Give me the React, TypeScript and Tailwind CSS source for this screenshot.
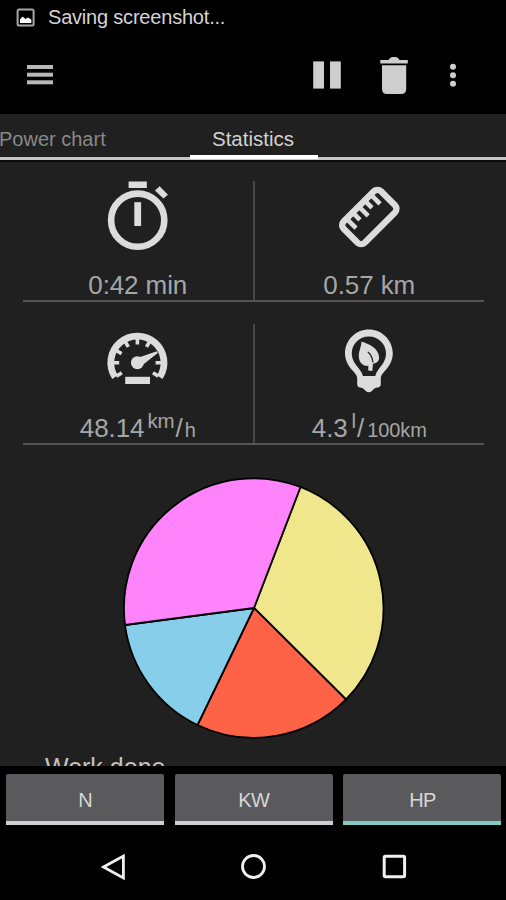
import type { ReactNode } from "react";

const slices = [
  { color: "#f0e68c", from: [300.5, 487], to: [346, 699.5], name: "khaki" },
  { color: "#ff6347", from: [346, 699.5], to: [197.5, 725], name: "tomato" },
  { color: "#87ceeb", from: [197.5, 725], to: [125, 625], name: "sky" },
  { color: "#ff83fa", from: [125, 625], to: [300.5, 487], name: "orchid" },
];

const units = [
  { label: "N", active: false },
  { label: "KW", active: false },
  { label: "HP", active: true },
];

const TimerIcon = () => (
  <svg width="80" height="80" viewBox="0 0 80 80" fill="#dcdcdc">
    <circle cx="39.7" cy="43.2" r="26.6" fill="none" stroke="#dcdcdc" strokeWidth="6.6" />
    <rect x="30.6" y="4.5" width="18.2" height="6.5" />
    <rect x="36.3" y="25.2" width="6.8" height="23.8" />
    <path d="M61.6 9.2 L70 17.8 L65.4 21.6 L57 13.5Z" />
  </svg>
);

const RulerIcon = () => (
  <svg width="80" height="80" viewBox="0 0 80 80" fill="none" stroke="#dcdcdc">
    <g transform="translate(40.3 40) rotate(-45)">
      <rect x="-26.4" y="-14.9" width="52.8" height="29.8" rx="5" strokeWidth="6.4" />
      <path d="M-17.2 -14V-1.6 M-8.6 -14V-4.6 M0 -14V-1.6 M8.4 -14V-4.6 M16.8 -14V-1.6" strokeWidth="4.6" />
    </g>
  </svg>
);

const GaugeIcon = () => (
  <svg width="80" height="80" viewBox="0 0 80 80" fill="none" stroke="#dcdcdc">
    <g transform="translate(39.4 42.7)">
      <path d="M-22.3 14.5 A26.6 26.6 0 1 1 22.3 14.5" strokeWidth="6.8" />
      <path d="M-24 0H-18.2 M24 0H18.2 M0 -24V-18.2 M-20.8 -12L-15.8 -9.1 M-12 -20.8L-9.1 -15.8 M12 -20.8L9.1 -15.8 M-21 13.6L-15.6 10.1 M21 13.6L15.6 10.1" strokeWidth="3.6" />
      <circle r="6.5" fill="#dcdcdc" stroke="none" />
      <path d="M2 -5.4 L19.5 -11.4 L20.4 -9.7 L5.5 2Z" fill="#dcdcdc" stroke="none" />
    </g>
    <rect x="27.2" y="56.8" width="24.8" height="7.2" fill="#dcdcdc" stroke="none" />
  </svg>
);

const BulbIcon = () => (
  <svg width="80" height="80" viewBox="0 0 80 80">
    <path
      d="M39.8 9.6 C52.8 9.6 63.8 20.2 63.8 33.3 C63.8 40 60.8 45.6 56.5 50.3 C53.5 53.8 51.8 55.5 51.8 58 V64.2 Q51.8 67.2 48.2 67.4 Q45.5 67.5 43.8 70 Q42.3 72.3 39.8 72.3 Q37.3 72.3 35.8 70 Q34 67.5 31.4 67.4 Q28.2 67.2 28.2 64.2 V58 C28.2 55.5 26.3 53.8 23.3 50.3 C19 45.6 16 40 16 33.3 C16 20.2 26.8 9.6 39.8 9.6Z"
      fill="#dcdcdc"
    />
    <path
      d="M39.8 16.4 C49.5 16.4 57 24 57 33.3 C57 40.5 53 45 50.2 48.5 C48.2 51 46.8 53.5 46.3 56 H33.9 C33.4 53.5 31.8 51 29.8 48.5 C27 45 22.8 40.5 22.8 33.3 C22.8 24 30.2 16.4 39.8 16.4Z"
      fill="#202020"
    />
    <path
      d="M32.4 21.5 C38 23.4 50 27.4 50.2 38 Q50 42.6 44 43.8 L43.3 51 L39.2 50.4 L39.4 45.8 C33.5 46.6 29.8 42 29.8 36 C29.8 30.5 32.4 27 32.4 21.5Z"
      fill="#dcdcdc"
    />
    <path d="M38.8 32 Q43 35 44 42.5" fill="none" stroke="#202020" strokeWidth="1.2" />
  </svg>
);

const Stat = ({ icon, children }: { icon: ReactNode; children: ReactNode }) => (
  <div className="flex flex-1 flex-col items-center">
    <div className="h-[80px] w-[80px] shrink-0">{icon}</div>
    <div className="mt-[10px] flex h-[36px] shrink-0 items-center whitespace-nowrap text-[26px] leading-[36px] tracking-[-0.1px] text-[#a6a6a6]">
      {children}
    </div>
  </div>
);

const App = () => {
  return (
    <div className="flex h-[900px] w-[506px] flex-col overflow-hidden bg-black font-['Liberation_Sans',Arial,sans-serif]">
      {/* Status bar */}
      <div className="flex h-[35px] items-center pl-[16px]">
        <svg width="19" height="19" viewBox="0 0 19 19">
          <rect x="1.6" y="1.4" width="16" height="16.2" rx="1.5" fill="none" stroke="#a8a8a8" strokeWidth="2" />
          <path d="M4 15 V11.5 L6.5 8.5 L9.5 11 L12 9.5 L15.3 11.5 V15Z" fill="#fff" />
        </svg>
        <span className="ml-[13px] text-[20px] leading-[35px] tracking-[-0.2px] text-[#d4d4d4]">Saving screenshot...</span>
      </div>

      {/* Toolbar */}
      <div className="flex h-[79px] items-center pl-[27px]">
        <svg width="26" height="20" viewBox="0 0 26 20" fill="#b8b8b8">
          <rect y="0" width="26" height="4" />
          <rect y="7.7" width="26" height="4" />
          <rect y="15.3" width="26" height="4" />
        </svg>
        <svg className="ml-[260px]" width="28" height="28" viewBox="0 0 28 28" fill="#cecece">
          <rect x="0.2" y="0.4" width="10.8" height="27.2" />
          <rect x="17" y="0.4" width="10.8" height="27.2" />
        </svg>
        <svg className="ml-[39px]" width="28" height="38" viewBox="0 0 28 38" fill="#cecece">
          <path d="M0.3 4 H8.4 Q10.4 1 12.4 1 H15.8 Q17.8 1 19.6 4 H27.8 V7.4 H0.3Z" />
          <path d="M2 9.2 H26.2 V33 Q26.2 38 21.2 38 H7 Q2 38 2 33Z" />
        </svg>
        <svg className="ml-[42px]" width="6" height="24" viewBox="0 0 6 24" fill="#cecece">
          <circle cx="3" cy="3.7" r="3" />
          <circle cx="3" cy="12.2" r="3" />
          <circle cx="3" cy="20.7" r="3" />
        </svg>
      </div>

      {/* Tabs */}
      <div className="relative h-[48px] shrink-0 bg-[#202020]">
        <div className="flex h-[50px] text-[20px] leading-[50px] whitespace-nowrap">
          <div className="w-[189px] -indent-[1px] text-[#898989]">Power chart</div>
          <div className="w-[128px] text-center text-[20.5px] text-[#d2d2d2]">Statistics</div>
        </div>
        <div className="absolute inset-x-0 top-[43px] h-[3px] bg-[#c6c6c6]" />
        <div className="absolute inset-x-0 top-[46px] h-[2px] bg-[#0c0c0c]" />
        <div className="absolute left-[190px] top-[41px] h-[4px] w-[128px] bg-white" />
      </div>

      {/* Statistics */}
      <div className="h-[604px] shrink-0 overflow-hidden bg-[#202020] pt-[15px]">
        <div className="ml-[23px] flex h-[125px] w-[461px] border-b-2 border-[#545454]">
          <Stat icon={<TimerIcon />}>0:42 min</Stat>
          <div className="mt-[4px] w-[2px] shrink-0 bg-[#484848]" />
          <Stat icon={<RulerIcon />}>0.57 km</Stat>
        </div>
        <div className="ml-[23px] mt-[18px] flex h-[125px] w-[461px] border-b-2 border-[#545454]">
          <Stat icon={<GaugeIcon />}>
            <span>48.14</span>
            <span className="relative -top-[7px] ml-[3px] text-[20.5px]">km</span>
            <span className="ml-[1px]">/</span>
            <span className="relative top-[2px] ml-[2px] text-[20px]">h</span>
          </Stat>
          <div className="mt-[4px] w-[2px] shrink-0 bg-[#484848]" />
          <Stat icon={<BulbIcon />}>
            <span>4.3</span>
            <span className="relative -top-[7px] ml-[4px] text-[20.5px]">l</span>
            <span className="ml-[1px]">/</span>
            <span className="relative top-[2px] ml-[3px] text-[20px]">100km</span>
          </Stat>
        </div>
        <svg className="ml-[119px] mt-[29px] block" width="270" height="270" viewBox="119 474 270 270">
          {slices.map((s) => (
            <path
              key={s.name}
              d={`M254 608 L${s.from[0]} ${s.from[1]} A130 130 0 0 1 ${s.to[0]} ${s.to[1]}Z`}
              fill={s.color}
              stroke="#000"
              strokeWidth="1.8"
              strokeLinejoin="round"
            />
          ))}
        </svg>
        <div className="pl-[45px] pt-[8px] text-[25px] leading-[30px] text-[#c4c4c4]">Work done</div>
      </div>

      {/* Unit switch */}
      <div className="flex shrink-0 gap-[10.7px] pl-[6px] pt-[8px]">
        {units.map((unit) => (
          <button
            key={unit.label}
            className={`h-[51px] w-[158px] rounded-t-[2px] border-b-4 bg-[#5a5a5c] pt-[5px] text-[20px] leading-[42px] tracking-[-0.7px] text-[#d6d6d6] ${
              unit.active ? "border-[#80cbc4]" : "border-[#d0d0d0]"
            }`}
          >
            {unit.label}
          </button>
        ))}
      </div>

      {/* Navigation bar */}
      <div className="flex h-[75px] items-center pt-[8px] pl-[101px]">
        <svg width="26" height="28" viewBox="0 0 26 28" fill="none" stroke="#f0f0f0" strokeWidth="2.8">
          <path d="M2.5 14 L22.4 3 V25Z" />
        </svg>
        <svg className="ml-[113px]" width="27" height="27" viewBox="0 0 27 27" fill="none" stroke="#f0f0f0" strokeWidth="2.8">
          <circle cx="13.5" cy="13.5" r="11" />
        </svg>
        <svg className="ml-[115px]" width="25" height="25" viewBox="0 0 25 25" fill="none" stroke="#f0f0f0" strokeWidth="3">
          <rect x="2.2" y="2.2" width="20.4" height="20.6" rx="1.2" />
        </svg>
      </div>
    </div>
  );
};

export default App;
